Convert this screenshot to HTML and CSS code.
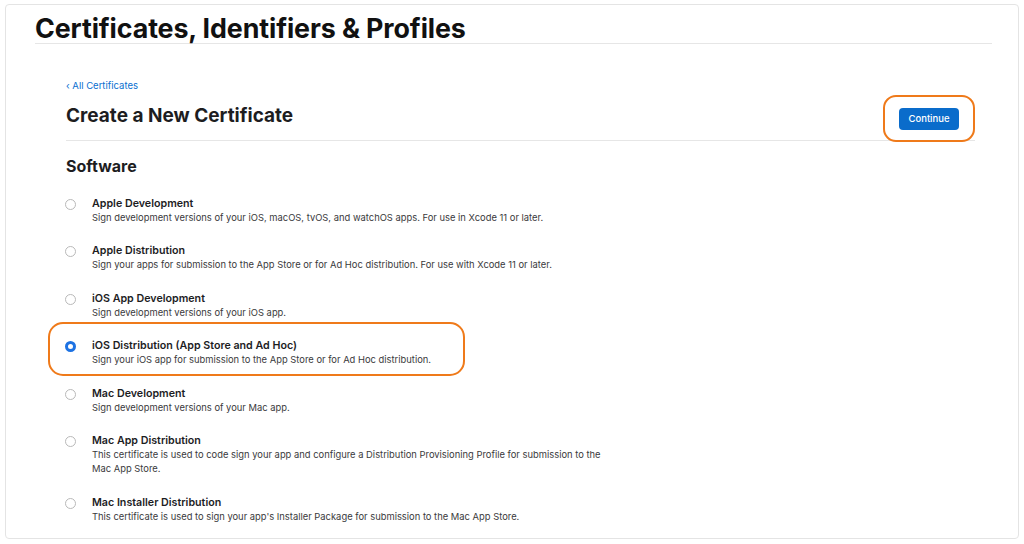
FILE: index.html
```html
<!DOCTYPE html>
<html lang="en">
<head>
<meta charset="utf-8">
<title>Certificates, Identifiers &amp; Profiles</title>
<link rel="stylesheet" href="styles.css">
</head>
<body>
<div class="frame">
  <header class="top">
    <h1 class="page-title">Certificates, Identifiers &amp; Profiles</h1>
  </header>
  <main class="content">
    <a class="back" href="#">‹ All Certificates</a>
    <div class="head-row">
      <h2 class="section-title">Create a New Certificate</h2>
      <div class="ring ring-btn">
        <button class="btn" type="button">Continue</button>
      </div>
    </div>
    <h3 class="group-title">Software</h3>
    <ul class="options">
      <li class="option">
        <span class="radio"></span>
        <div class="opt-text">
          <div class="opt-name">Apple Development</div>
          <div class="opt-desc">Sign development versions of your iOS, macOS, tvOS, and watchOS apps. For use in Xcode 11 or later.</div>
        </div>
      </li>
      <li class="option">
        <span class="radio"></span>
        <div class="opt-text">
          <div class="opt-name">Apple Distribution</div>
          <div class="opt-desc">Sign your apps for submission to the App Store or for Ad Hoc distribution. For use with Xcode 11 or later.</div>
        </div>
      </li>
      <li class="option">
        <span class="radio"></span>
        <div class="opt-text">
          <div class="opt-name">iOS App Development</div>
          <div class="opt-desc">Sign development versions of your iOS app.</div>
        </div>
      </li>
      <li class="option selected">
        <div class="ring ring-opt"></div>
        <span class="radio"></span>
        <div class="opt-text">
          <div class="opt-name">iOS Distribution (App Store and Ad Hoc)</div>
          <div class="opt-desc">Sign your iOS app for submission to the App Store or for Ad Hoc distribution.</div>
        </div>
      </li>
      <li class="option">
        <span class="radio"></span>
        <div class="opt-text">
          <div class="opt-name">Mac Development</div>
          <div class="opt-desc">Sign development versions of your Mac app.</div>
        </div>
      </li>
      <li class="option">
        <span class="radio"></span>
        <div class="opt-text">
          <div class="opt-name">Mac App Distribution</div>
          <div class="opt-desc">This certificate is used to code sign your app and configure a Distribution Provisioning Profile for submission to the Mac App Store.</div>
        </div>
      </li>
      <li class="option">
        <span class="radio"></span>
        <div class="opt-text">
          <div class="opt-name">Mac Installer Distribution</div>
          <div class="opt-desc">This certificate is used to sign your app's Installer Package for submission to the Mac App Store.</div>
        </div>
      </li>
    </ul>
  </main>
</div>
</body>
</html>
```

FILE: styles.css
```css
* { box-sizing: border-box; }
html, body { margin: 0; padding: 0; background: #ffffff; }
body {
  font-family: Inter, "Liberation Sans", Arial, sans-serif;
  color: #1d1d1f;
  -webkit-font-smoothing: antialiased;
}
.frame {
  margin: 4px 5px 0 5px;
  height: 535px;
  border: 1px solid #e4e4e4;
  border-radius: 4px;
  overflow: hidden;
}
.top {
  margin: 0 26px 0 29px;
  padding-top: 9px;
  border-bottom: 1px solid #e6e6e6;
}
.page-title {
  margin: 0;
  font-size: 26.8px;
  line-height: 29px;
  font-weight: 700;
  letter-spacing: -0.1px;
  color: #111111;
}
.content {
  padding: 36px 0 0 60px;
  margin-right: 43px;
}
.back {
  display: block;
  font-size: 9.5px;
  line-height: 12px;
  color: #0a6fd0;
  text-decoration: none;
}
.head-row {
  display: flex;
  align-items: center;
  justify-content: space-between;
  height: 46px;
  margin-top: 3px;
  border-bottom: 1px solid #e6e6e6;
}
.section-title {
  margin: 0 0 4px 0;
  font-size: 19px;
  line-height: 22px;
  font-weight: 700;
  color: #1d1d1f;
}
.ring {
  border: 2.5px solid #ef7a1a;
  background: #ffffff;
}
.ring-btn {
  position: relative;
  top: 1px;
  width: 92px;
  height: 47px;
  border-radius: 13px;
  display: flex;
  align-items: center;
  justify-content: center;
}
.btn {
  width: 60px;
  height: 22px;
  border: 0;
  border-radius: 4px;
  background: #0a6ccb;
  color: #ffffff;
  font-family: inherit;
  font-size: 9.5px;
  font-weight: 500;
  padding: 0;
}
.group-title {
  margin: 16px 0 0 0;
  font-size: 16px;
  line-height: 18px;
  font-weight: 700;
  color: #1d1d1f;
}
.options {
  list-style: none;
  margin: 21.5px 0 0 0;
  padding: 0;
  display: flex;
  flex-direction: column;
  gap: 19.6px;
}
.option {
  position: relative;
  display: flex;
  align-items: flex-start;
}
.radio {
  position: relative;
  flex: none;
  width: 11px;
  height: 11px;
  margin: 2px 16px 0 -1px;
  border: 1px solid #b9b9b9;
  border-radius: 50%;
  background: #ffffff;
}
.selected .radio {
  border: 3.5px solid #1d72e3;
  background: #ffffff;
}
.opt-text {
  position: relative;
  max-width: 512px;
}
.opt-name {
  font-size: 10.7px;
  line-height: 14px;
  font-weight: 600;
  color: #1d1d1f;
}
.opt-desc {
  font-size: 9.4px;
  line-height: 14px;
  color: #3a3a3c;
}
.ring-opt {
  position: absolute;
  left: -18px;
  top: -17px;
  width: 417px;
  height: 54px;
  border-radius: 15px;
}
```
